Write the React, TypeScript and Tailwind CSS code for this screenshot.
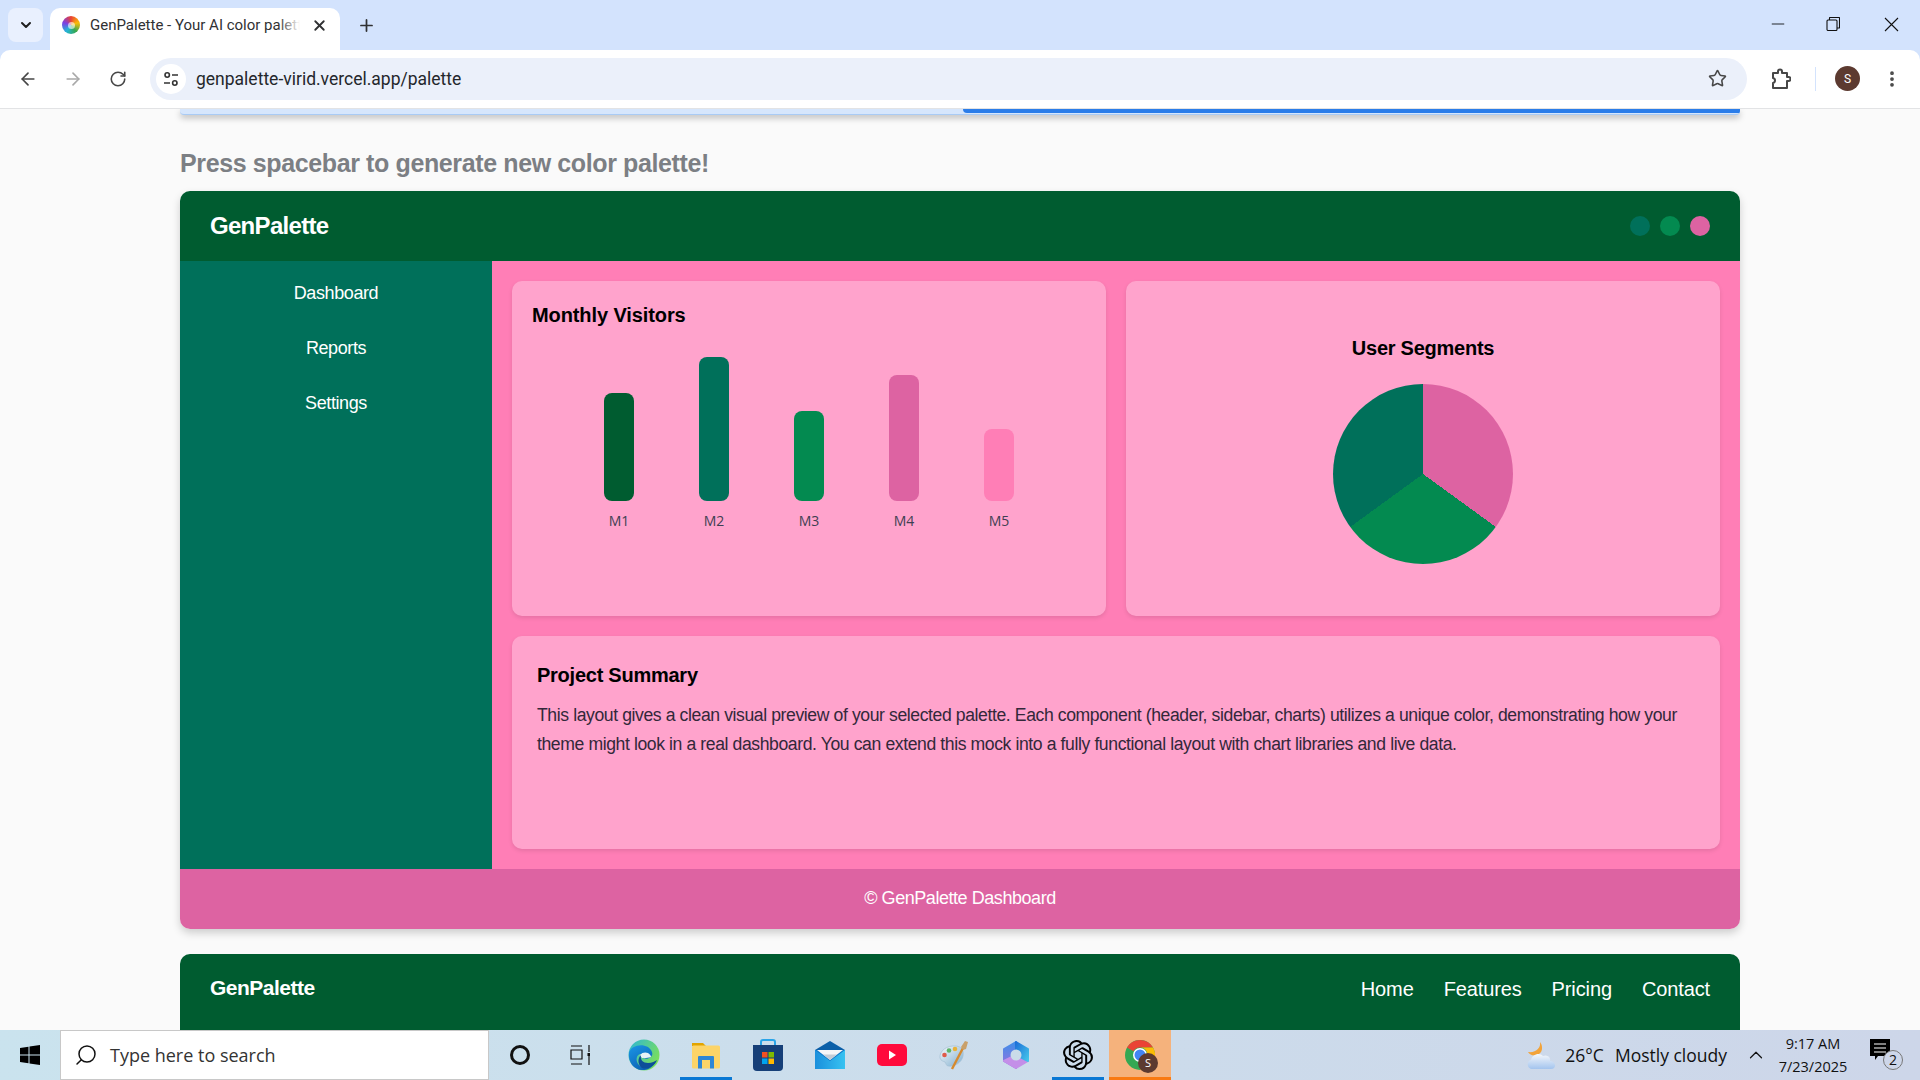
import React from "react";
import { ArrowLeft, ArrowRight, RotateCw, Star, EllipsisVertical, ChevronDown, X, Plus, Minus, ChevronUp, Search } from "lucide-react";
import { SiOpenai } from "react-icons/si";

const sans = "font-['Liberation_Sans',Arial,sans-serif]";
const ui = "font-['Open_Sans','Noto_Sans',sans-serif]";
const chromeFont = "font-['Roboto','Open_Sans',sans-serif]";

function Browser() {
  return (
    <div className={`bg-[#d3e3fd] h-[109px] shrink-0 flex flex-col ${chromeFont}`}>
      <div className="h-[50px] flex items-end relative shrink-0">
        <div className="ml-2 mb-2 w-[35px] h-[34px] rounded-lg bg-[#e9f0fe] flex items-center justify-center">
          <ChevronDown size={16} strokeWidth={3} className="text-[#1f1f1f]" />
        </div>
        <div className="ml-[7px] w-[290px] h-[42px] bg-white rounded-t-[10px] flex items-center pl-[12px] pb-[8px] relative">
          <div className="w-[18px] h-[18px] rounded-full bg-[conic-gradient(#e94235,#fbbc05,#34a853,#25b5d8,#7b3fe4,#e94235)] flex items-center justify-center shrink-0">
            <div className="w-[7px] h-[7px] rounded-full bg-white/60" />
          </div>
          <div className="ml-[10px] w-[210px] relative overflow-hidden whitespace-nowrap text-[15px] leading-[20px] text-[#303133]">
            GenPalette - Your AI color palette
            <div className="absolute right-0 top-0 bottom-0 w-[22px] bg-gradient-to-r from-transparent to-white" />
          </div>
          <X size={17} strokeWidth={2.6} className="ml-[11px] text-[#303133] shrink-0" />
        </div>
        <Plus size={19} strokeWidth={2.2} className="ml-[17px] mb-[15px] text-[#303133]" />
        <div className="ml-auto flex items-center h-[50px] pb-[2px]">
          <Minus size={20} strokeWidth={1} className="text-black mr-[38px]" />
          <svg width="14" height="14" viewBox="0 0 14 14" className="mr-[44px]" fill="none" stroke="#111" strokeWidth="1.1">
            <rect x="1" y="3" width="10" height="10.5" rx="1" />
            <path d="M3.5 3V1a.5.5 0 0 1 .5-.5h9a.5.5 0 0 1 .5.5v9.5a.5.5 0 0 1-.5.5H11" />
          </svg>
          <svg width="15" height="15" viewBox="0 0 15 15" className="mr-[21px]" stroke="#111" strokeWidth="1.1"><path d="M1 1l13 13M14 1L1 14" /></svg>
        </div>
      </div>
      <div className="h-[59px] bg-white rounded-t-[10px] border-b border-[#e2e3e5] flex items-center pb-[1px] relative">
        <ArrowLeft size={20} strokeWidth={2} className="ml-[18px] text-[#474747]" />
        <ArrowRight size={20} strokeWidth={2} className="ml-[25px] text-[#a9a9a9]" />
        <RotateCw size={18} strokeWidth={2.1} className="ml-[26px] text-[#474747]" />
        <div className="ml-[23px] w-[1597px] h-[42px] rounded-full bg-[#ebf0fa] flex items-center pl-[6px]">
          <div className="w-[30px] h-[30px] rounded-full bg-white flex items-center justify-center">
            <svg width="16" height="16" viewBox="0 0 16 16" fill="none" stroke="#333" strokeWidth="1.6">
              <circle cx="4.2" cy="4" r="2.2" /><path d="M9 4h6M1 12h6" /><circle cx="11.8" cy="12" r="2.2" />
            </svg>
          </div>
          <div className="ml-[10px] text-[17.5px] leading-none text-[#24272b] mt-[3px]">genpalette-virid.vercel.app/palette</div>
          <Star size={19} strokeWidth={2} className="ml-auto mr-[20px] text-[#474747]" />
        </div>
        <svg width="20" height="22" viewBox="0 0 20 22" fill="none" stroke="#474747" strokeWidth="2" strokeLinejoin="round" className="ml-[24px]">
          <path d="M2 5h5V3.500a2 2 0 0 1 4 0V5h5v4h1.500a2 2 0 0 1 0 4H16v7H2v-5a2.500 2.500 0 0 0 2-2.500A2.500 2.500 0 0 0 2 10z" />
        </svg>
        <div className="ml-[24px] w-px h-6 bg-[#d3e3fd]" />
        <div className="ml-[19px] w-[25px] h-[25px] rounded-full bg-[#5c3a30] text-white text-[12px] flex items-center justify-center">S</div>
        <EllipsisVertical size={20} strokeWidth={2.5} className="ml-[22px] text-[#474747]" />
      </div>
    </div>
  );
}

function Page() {
  const bars = [
    { h: "h-[108px]", c: "bg-[#005c30]", l: "M1" },
    { h: "h-[144px]", c: "bg-[#00705a]", l: "M2" },
    { h: "h-[90px]", c: "bg-[#038a50]", l: "M3" },
    { h: "h-[126px]", c: "bg-[#dd63a2]", l: "M4" },
    { h: "h-[72px]", c: "bg-[#ff7eb6]", l: "M5" },
  ];
  return (
    <div className={`flex-1 min-h-0 overflow-hidden bg-[#fafafa] ${sans}`}>
      <div className="mx-[180px] h-[6px] rounded-b-[4px] bg-[#d6e6fc] border-b border-[#a9cbf5] shadow-[0_3px_6px_rgba(0,0,0,0.25)] flex justify-end overflow-hidden">
        <div className="w-[777px] h-[4px] rounded-bl-[4px] bg-[#2b7de9]" />
      </div>
      <div className="mx-[180px]">
        <h2 className="mt-[33px] h-[30px] text-[25px] leading-[30px] font-bold tracking-[-0.38px] text-[#7c7f84]">Press spacebar to generate new color palette!</h2>
        <div className="mt-[13px] rounded-[10px] overflow-hidden shadow-[0_4px_8px_rgba(0,0,0,0.18)]">
          <header className="h-[70px] bg-[#005c30] px-[30px] flex items-center justify-between">
            <div className="text-[24px] font-bold text-white tracking-[-0.7px]">GenPalette</div>
            <div className="flex gap-[10px]">
              <span className="w-5 h-5 rounded-full bg-[#00705a]" />
              <span className="w-5 h-5 rounded-full bg-[#038a50]" />
              <span className="w-5 h-5 rounded-full bg-[#dd63a2]" />
            </div>
          </header>
          <div className="flex h-[608px]">
            <aside className="w-[312px] bg-[#00705a] pt-[17px] flex flex-col gap-[25px] text-white text-center text-[18px] leading-[30px] tracking-[-0.4px]">
              <div>Dashboard</div>
              <div>Reports</div>
              <div>Settings</div>
            </aside>
            <main className="flex-1 bg-[#ff7eb6] p-5 grid grid-cols-2 grid-rows-[335px_213px] gap-5">
              <section className="bg-[#ffa3cc] rounded-[10px] shadow-[0_2px_4px_rgba(0,0,0,0.1)] p-5">
                <h3 className="mt-[1px] text-[20px] leading-[26px] font-bold text-black tracking-[-0.1px]">Monthly Visitors</h3>
                <div className="mt-[29px] h-[144px] flex justify-center items-end gap-[65px]">
                  {bars.map((b) => (
                    <div key={b.l} className={`w-[30px] rounded-[8px] ${b.h} ${b.c} relative`}>
                      <span className={`absolute top-full left-1/2 -translate-x-1/2 mt-[11px] text-[14px] leading-[18px] text-[#3f3f52] ${ui}`}>{b.l}</span>
                    </div>
                  ))}
                </div>
              </section>
              <section className="bg-[#ffa3cc] rounded-[10px] shadow-[0_2px_4px_rgba(0,0,0,0.1)] flex flex-col items-center pt-[54px]">
                <h3 className="text-[20px] leading-[26px] font-bold text-black tracking-[-0.25px]">User Segments</h3>
                <div className="mt-[23px] w-[180px] h-[180px] rounded-full bg-[conic-gradient(#dd63a2_0_35%,#038a50_35%_65%,#00705a_65%_100%)]" />
              </section>
              <section className="col-span-2 bg-[#ffa3cc] rounded-[10px] shadow-[0_2px_4px_rgba(0,0,0,0.1)] px-[25px] pt-[26px]">
                <h3 className="text-[20px] leading-[26px] font-bold text-black tracking-[-0.25px]">Project Summary</h3>
                <p className="mt-[13px] text-[17.6px] leading-[29px] tracking-[-0.4px] text-[#33283a]">
                  This layout gives a clean visual preview of your selected palette. Each component (header, sidebar, charts) utilizes a unique color, demonstrating how your theme might look in a real dashboard. You can extend this mock into a fully functional layout with chart libraries and live data.
                </p>
              </section>
            </main>
          </div>
          <footer className="h-[60px] pb-[1px] bg-[#dd63a2] flex items-center justify-center text-white text-[18px] tracking-[-0.45px]">© GenPalette Dashboard</footer>
        </div>
        <nav className="mt-[25px] h-[90px] rounded-t-[10px] bg-[#005c30] px-[30px] flex items-start justify-between pt-[20px] text-white">
          <div className="text-[21px] leading-[28px] font-bold tracking-[-0.5px]">GenPalette</div>
          <div className="flex gap-[30px] text-[20px] leading-[30px] font-normal tracking-[-0.12px]">
            <span>Home</span><span>Features</span><span>Pricing</span><span>Contact</span>
          </div>
        </nav>
      </div>
    </div>
  );
}

function Edge() {
  return (
    <svg width="32" height="32" viewBox="0 0 32 32">
      <defs>
        <linearGradient id="e1" x1="0" y1="0" x2="1" y2="0.6"><stop offset="0" stopColor="#2cb5d8" /><stop offset="1" stopColor="#7be05a" /></linearGradient>
        <linearGradient id="e2" x1="0" y1="0" x2="0.6" y2="1"><stop offset="0" stopColor="#1b96e6" /><stop offset="1" stopColor="#0b62b4" /></linearGradient>
      </defs>
      <circle cx="16" cy="16" r="15.5" fill="url(#e1)" />
      <path d="M1 14C3 5 20 3 24 13c2 6-6 8-9 6-2-1-2-3-1-4-6-1-7 7-3 11 3 3 10 5 16-2-4 7-11 7-13 7C6 31 0 23 1 14z" fill="url(#e2)" />
      <path d="M12 16c2-3 6-3 8-2 2 1 3 3 3 4-4 1-8 2-10 0-1-.6-1.500-1-1-2z" fill="#e6f3f6" />
      <path d="M14 29c-4-3-5-9-1-13-1 5 2 8 7 8 4 0 7-2 9-3-2 6-9 10-15 8z" fill="#0d4f99" />
    </svg>
  );
}
function Folder() {
  return (
    <svg width="30" height="30" viewBox="0 0 30 30">
      <path d="M1 3h11l3 3H1z" fill="#e2a400" />
      <rect x="1" y="5.5" width="28" height="23" rx="1.5" fill="#fcd468" />
      <path d="M7 28.500V17a1 1 0 0 1 1-1h14a1 1 0 0 1 1 1v11.500h-4V20h-8v8.500z" fill="#2e86d6" />
    </svg>
  );
}
function Store() {
  return (
    <svg width="30" height="32" viewBox="0 0 30 32">
      <path d="M8 6V3a2 2 0 0 1 2-2h10a2 2 0 0 1 2 2v3" fill="none" stroke="#2aa4e8" strokeWidth="2" />
      <path d="M0 6h30v22a4 4 0 0 1-4 4H4a4 4 0 0 1-4-4z" fill="#163f78" />
      <rect x="9" y="13" width="5.500" height="5.500" fill="#f25022" />
      <rect x="15.500" y="13" width="5.500" height="5.500" fill="#7fba00" />
      <rect x="9" y="19.500" width="5.500" height="5.500" fill="#00a4ef" />
      <rect x="15.500" y="19.500" width="5.500" height="5.500" fill="#ffb900" />
    </svg>
  );
}
function Mail() {
  return (
    <svg width="30" height="28" viewBox="0 0 30 28">
      <defs>
        <linearGradient id="m1" x1="0" y1="0" x2="1" y2="0"><stop offset="0" stopColor="#1a8fdc" /><stop offset="1" stopColor="#37c2f1" /></linearGradient>
      </defs>
      <path d="M0 9L15 0l15 9z" fill="#0b5fa8" />
      <rect y="9" width="30" height="19" fill="#0f78c9" />
      <path d="M2 9h26L15 19z" fill="#f5f6f8" />
      <path d="M8 13.500h14L15 19z" fill="#c3ccd6" />
      <path d="M0 9l15 11L30 9v19H0z" fill="url(#m1)" />
    </svg>
  );
}
function YouTube() {
  return (
    <svg width="30" height="22" viewBox="0 0 30 22">
      <rect width="30" height="22" rx="5" fill="#ff0a3c" />
      <path d="M12 6.500v9l7-4.500z" fill="#fff" />
    </svg>
  );
}
function PaintIcon() {
  return (
    <svg width="30" height="32" viewBox="0 0 30 32">
      <defs>
        <linearGradient id="p1" x1="0" y1="0" x2="1" y2="1"><stop offset="0" stopColor="#f7f9fb" /><stop offset="1" stopColor="#7fafd0" /></linearGradient>
      </defs>
      <path d="M1 19C0 12 8 6 17 7c6 .6 8 5 7 10-1 6-8 11-15 10-2-.3-2-3-3-4-2-1-4-1-5-4z" fill="url(#p1)" stroke="#a3c0d4" strokeWidth="0.7" />
      <circle cx="5.500" cy="16" r="2.300" fill="#e05b4a" />
      <circle cx="10" cy="11.500" r="2.300" fill="#5fb56a" />
      <circle cx="16" cy="10" r="2.300" fill="#e8b23a" />
      <path d="M13 30L24 9" stroke="#d68a2e" strokeWidth="2.400" />
      <path d="M22 8l4-6 3 1-2 7-3 1z" fill="#c9a06a" />
    </svg>
  );
}
function Copilot() {
  return (
    <svg width="28" height="30" viewBox="0 0 28 30" strokeLinejoin="round">
      <defs>
        <linearGradient id="c1" x1="0" y1="0" x2="0" y2="1"><stop offset="0" stopColor="#3f8fe8" /><stop offset="1" stopColor="#9a6fe0" /></linearGradient>
        <linearGradient id="c2" x1="0" y1="0" x2="1" y2="1"><stop offset="0" stopColor="#1d6fd8" /><stop offset="1" stopColor="#45c6ea" /></linearGradient>
      </defs>
      <path d="M14 2L2 9v12l12 7z" fill="url(#c1)" stroke="url(#c1)" strokeWidth="2" />
      <path d="M2 21l12 7 12-7-12-6z" fill="#c48fe8" stroke="#c48fe8" strokeWidth="2" />
      <path d="M14 2l12 7v12l-12-6z" fill="url(#c2)" stroke="url(#c2)" strokeWidth="2" />
      <circle cx="14" cy="15" r="5.500" fill="#cadbe9" />
    </svg>
  );
}
function Chrome() {
  return (
    <div className="relative w-[30px] h-[30px]">
      <svg width="30" height="30" viewBox="0 0 30 30">
        <circle cx="15" cy="15" r="15" fill="#34a853" />
        <path d="M15 0a15 15 0 0 1 13 7.500H15a7.500 7.500 0 0 0-6.500 3.750L2 7.500A15 15 0 0 1 15 0z" fill="#ea4335" />
        <path d="M28 7.500A15 15 0 0 1 15 30l6.500-11.250A7.500 7.500 0 0 0 15 7.500z" fill="#fbbc05" />
        <circle cx="15" cy="15" r="7" fill="#fff" />
        <circle cx="15" cy="15" r="5.500" fill="#4285f4" />
      </svg>
      <div className="absolute -right-[3px] -bottom-[3px] w-5 h-5 rounded-full bg-[#5c3a30] text-white text-[11px] flex items-center justify-center">S</div>
    </div>
  );
}

function Slot({ children, under, active }: { children: React.ReactNode; under?: boolean; active?: boolean }) {
  return (
    <div className={`w-[62px] h-[50px] flex items-center justify-center relative ${active ? "bg-[#f5b27c]" : ""}`}>
      {children}
      {under && <div className="absolute left-[5px] right-[5px] bottom-0 h-[3px] bg-[#0a78d4]" />}
      {active && <div className="absolute inset-x-0 bottom-0 h-[3px] bg-[#f97a12]" />}
    </div>
  );
}

function Taskbar() {
  return (
    <div className={`h-[50px] shrink-0 flex items-stretch bg-gradient-to-r from-[#cae3ee] to-[#cdd6e9] relative ${ui}`}>
      <div className="w-[60px] flex items-center justify-center">
        <svg width="20" height="20" viewBox="0 0 20 20" fill="#000"><path d="M0 3l8.500-1.200v7.700H0zM9.500 1.600L20 0v9.500H9.500zM0 10.500h8.500v7.700L0 17zM9.500 10.500H20V20L9.500 18.400z" /></svg>
      </div>
      <div className="w-[429px] h-[50px] bg-white border border-[#c8c8c8] flex items-center pl-[13px]">
        <Search size={24} strokeWidth={1.5} className="text-[#111] -scale-x-100" />
        <span className="ml-[12px] text-[18px] text-[#333]">Type here to search</span>
      </div>
      <Slot><div className="w-[20px] h-[20px] rounded-full border-[3px] border-[#111]" /></Slot>
      <Slot>
        <svg width="20" height="20" viewBox="0 0 20 20" fill="none" stroke="#111" strokeWidth="1.200" className="-ml-[4px]">
          <path d="M1 1h11M1 19h11M1 5h11v9H1zM19 0v7M19 11v9" /><rect x="17.500" y="8" width="3" height="3" fill="#111" stroke="none" />
        </svg>
      </Slot>
      <Slot><Edge /></Slot>
      <Slot under><Folder /></Slot>
      <Slot><Store /></Slot>
      <Slot><Mail /></Slot>
      <Slot><YouTube /></Slot>
      <Slot><PaintIcon /></Slot>
      <Slot><Copilot /></Slot>
      <Slot under><SiOpenai size={30} className="text-black" /></Slot>
      <Slot active><Chrome /></Slot>
      <div className="ml-auto flex items-center text-[#111]">
        <svg width="30" height="28" viewBox="0 0 30 28">
          <defs>
            <linearGradient id="w1" x1="0" y1="0" x2="0" y2="1"><stop offset="0" stopColor="#f4f7fb" /><stop offset="1" stopColor="#a3c4ee" /></linearGradient>
          </defs>
          <path d="M14 1c1 6-4 11-12 10 3 5 10 4 13 0 2-3 1-8-1-10z" fill="#f2a33a" />
          <path d="M6 28C1 28 0 20 5 19c1-6 9-8 12-4 5-2 8 2 7 5 6 0 7 8 1 8z" fill="url(#w1)" />
        </svg>
        <span className="ml-[9px] text-[17.5px]">26°C</span>
        <span className="ml-[11px] text-[17.5px]">Mostly cloudy</span>
        <ChevronUp size={22} strokeWidth={1.3} className="ml-[18px]" />
        <div className="ml-[14px] w-[64px] flex flex-col items-center text-[14.5px] leading-[23px]">
          <span>9:17 AM</span>
          <span>7/23/2025</span>
        </div>
        <div className="ml-[25px] mr-[18px] w-[32px] h-[32px] relative">
          <svg width="22" height="22" viewBox="0 0 22 22"><path d="M0 0h20v17H8l-3 4v-4H0z" fill="#000" /><path d="M4 5h12M4 9h12M4 13h12" stroke="#fff" strokeWidth="1.200" /></svg>
          <div className="absolute right-[-1px] bottom-[1px] w-[20px] h-[20px] rounded-full bg-[#cdd6e9] border border-[#777] text-[14px] leading-none flex items-center justify-center">2</div>
        </div>
      </div>
    </div>
  );
}

export default function App() {
  return (
    <div className="w-[1920px] h-[1080px] flex flex-col overflow-hidden">
      <Browser />
      <Page />
      <Taskbar />
    </div>
  );
}
